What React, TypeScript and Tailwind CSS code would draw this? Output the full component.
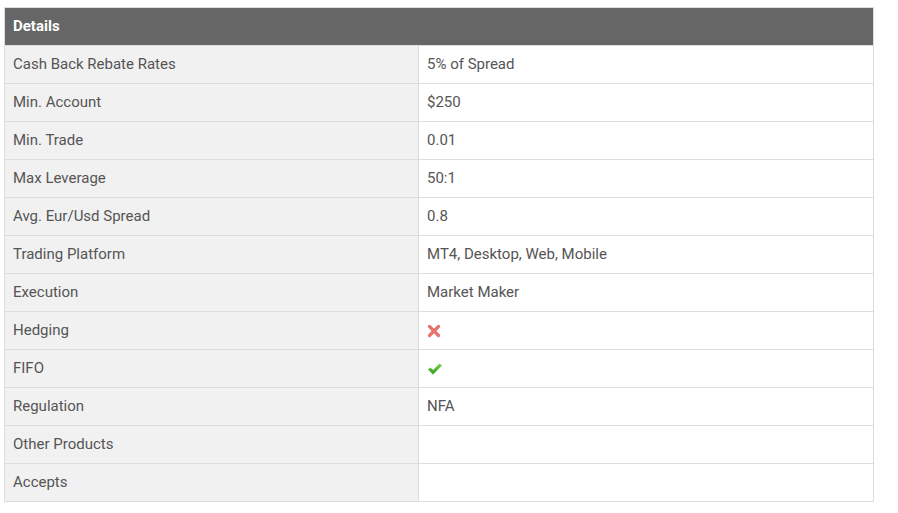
import React from "react";

const rows: [string, React.ReactNode][] = [
  ["Cash Back Rebate Rates", "5% of Spread"],
  ["Min. Account", "$250"],
  ["Min. Trade", "0.01"],
  ["Max Leverage", "50:1"],
  ["Avg. Eur/Usd Spread", "0.8"],
  ["Trading Platform", "MT4, Desktop, Web, Mobile"],
  ["Execution", "Market Maker"],
  ["Hedging", "x"],
  ["FIFO", "check"],
  ["Regulation", "NFA"],
  ["Other Products", ""],
  ["Accepts", ""],
];

function Cross() {
  return (
    <svg width="14" height="14" viewBox="0 0 14 14">
      <path d="M2.5 2.5 L11.5 11.5 M11.5 2.5 L2.5 11.5" stroke="#e8716b" strokeWidth="3.2" strokeLinecap="round" />
    </svg>
  );
}

function Check() {
  return (
    <svg width="16" height="14" viewBox="0 0 16 14">
      <defs>
        <linearGradient id="g" x1="0" y1="0" x2="0" y2="1">
          <stop offset="0" stopColor="#7ad34a" />
          <stop offset="1" stopColor="#2e9a1c" />
        </linearGradient>
      </defs>
      <path d="M1 7.5 L3.5 5.5 L6 8 L12.5 1.5 L15 3.5 L6 12.5 Z" fill="url(#g)" />
    </svg>
  );
}

export default function App() {
  return (
    <div className="bg-white w-[898px] h-[513px] pt-[7px] pl-[4px]" style={{ fontFamily: "Roboto, sans-serif" }}>
      <div className="w-[870px] border border-[#dddddd] text-[15px] text-[#555555]">
        <div className="h-[38px] bg-[#666666] text-white font-bold flex items-center px-[8px] border-b border-[#dddddd]">
          Details
        </div>
        {rows.map(([k, v], i) => (
          <div key={i} className={`grid grid-cols-[414px_1fr] ${i < rows.length - 1 ? "h-[38px] border-b border-[#dddddd]" : "h-[37px]"}`}>
            <div className="bg-[#f1f1f1] border-r border-[#dddddd] flex items-center px-[8px]">{k}</div>
            <div className="flex items-center px-[8px]">
              {v === "x" ? <Cross /> : v === "check" ? <Check /> : v}
            </div>
          </div>
        ))}
      </div>
    </div>
  );
}
